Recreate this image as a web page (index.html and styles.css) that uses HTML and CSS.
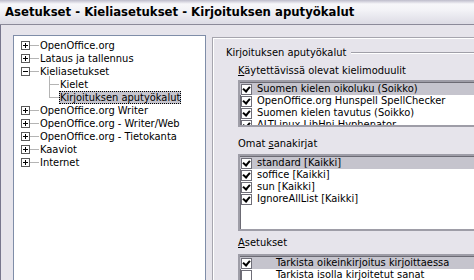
FILE: index.html
```html
<!DOCTYPE html>
<html lang="fi">
<head>
	<meta charset="UTF-8">
	<title>Asetukset - Kieliasetukset - Kirjoituksen aputyökalut</title>
	<link rel="stylesheet" href="styles.css">
</head>
<body>
	<div class="window">
		<div class="titlebar">Asetukset - Kieliasetukset - Kirjoituksen aputyökalut</div>
		<div class="body">
			<div class="tree">
				<ul class="root">
					<li class="node"><span class="exp plus"></span><span class="branch"></span><span class="label">OpenOffice.org</span></li>
					<li class="node"><span class="exp plus"></span><span class="branch"></span><span class="label">Lataus ja tallennus</span></li>
					<li class="node"><span class="exp minus"></span><span class="branch"></span><span class="label">Kieliasetukset</span></li>
					<li>
						<ul class="children">
							<li class="leaf"><span class="label">Kielet</span></li>
							<li class="leaf"><span class="label selected">Kirjoituksen aputyökalut</span></li>
						</ul>
					</li>
					<li class="node"><span class="exp plus"></span><span class="branch"></span><span class="label">OpenOffice.org Writer</span></li>
					<li class="node"><span class="exp plus"></span><span class="branch"></span><span class="label">OpenOffice.org - Writer/Web</span></li>
					<li class="node"><span class="exp plus"></span><span class="branch"></span><span class="label">OpenOffice.org - Tietokanta</span></li>
					<li class="node"><span class="exp plus"></span><span class="branch"></span><span class="label">Kaaviot</span></li>
					<li class="node"><span class="exp plus"></span><span class="branch"></span><span class="label">Internet</span></li>
				</ul>
			</div>

			<div class="page">
				<div class="group-title"><span>Kirjoituksen aputyökalut</span><i class="rule"></i></div>
				<div class="group">
					<div class="cap cap1"><u>K</u>äytettävissä olevat kielimoduulit</div>
					<div class="listbox lb1">
						<div class="row sel"><span class="check on"></span><span class="txt">Suomen kielen oikoluku (Soikko)</span></div>
						<div class="row"><span class="check on"></span><span class="txt">OpenOffice.org Hunspell SpellChecker</span></div>
						<div class="row"><span class="check on"></span><span class="txt">Suomen kielen tavutus (Soikko)</span></div>
						<div class="row"><span class="check on"></span><span class="txt">ALTLinux LibHnj Hyphenator</span></div>
					</div>

					<div class="cap cap2">Omat <u>s</u>anakirjat</div>
					<div class="listbox lb2">
						<div class="row sel"><span class="check on"></span><span class="txt">standard [Kaikki]</span></div>
						<div class="row"><span class="check on"></span><span class="txt">soffice [Kaikki]</span></div>
						<div class="row"><span class="check on"></span><span class="txt">sun [Kaikki]</span></div>
						<div class="row"><span class="check on"></span><span class="txt">IgnoreAllList [Kaikki]</span></div>
					</div>

					<div class="cap cap3"><u>A</u>setukset</div>
					<div class="listbox lb3">
						<div class="row sel"><span class="check on"></span><span class="txt">Tarkista oikeinkirjoitus kirjoittaessa</span></div>
						<div class="row"><span class="check"></span><span class="txt">Tarkista isolla kirjoitetut sanat</span></div>
					</div>
				</div>
			</div>
		</div>
	</div>
</body>
</html>
```

FILE: styles.css
```css
body {
	margin: 0;
	width: 474px;
	height: 280px;
	overflow: hidden;
	background: #e6e4eb;
	font-family: "DejaVu Sans Condensed", "Liberation Sans", sans-serif;
	font-size: 11px;
	color: #000;
}
ul {
	list-style: none;
	margin: 0;
	padding: 0;
}
.window {
	width: 640px;
	height: 280px;
	overflow: hidden;
}
.titlebar {
	height: 24px;
	line-height: 24px;
	padding-left: 5px;
	font-size: 13px;
	font-weight: bold;
	border-bottom: 1px solid #8b8a99;
	background: linear-gradient(#bdbccb 0, #f7f7fa 4px, #f3f3f7 10px, #dedde6 23px);
}
.body {
	display: flex;
	align-items: flex-start;
	height: 255px;
	padding: 10px 0 0 12px;
	border-left: 1px solid #77768d;
	box-sizing: border-box;
	overflow: hidden;
}

/* tree */
.tree {
	width: 191px;
	height: 260px;
	padding-top: 3px;
	background: #fff;
	border: 1px solid #7f8da8;
}
.node {
	display: flex;
	align-items: center;
	height: 13px;
	padding-left: 7px;
}
.exp {
	position: relative;
	width: 7px;
	height: 7px;
	border: 1px solid #5a5a5a;
	background: #fff;
}
.exp::before {
	content: "";
	position: absolute;
	left: 1px;
	top: 3px;
	width: 5px;
	height: 1px;
	background: #000;
}
.plus::after {
	content: "";
	position: absolute;
	left: 3px;
	top: 1px;
	width: 1px;
	height: 5px;
	background: #000;
}
.branch {
	width: 9px;
	height: 1px;
	background: #b4b4b4;
}
.label {
	padding: 0 1px;
	line-height: 13px;
	white-space: nowrap;
}
.label.selected {
	background: #c5c4cd;
	outline: 1px dotted #000;
	outline-offset: -1px;
}
.children {
	margin-left: 35px;
}
.leaf {
	position: relative;
	height: 13px;
	padding-left: 10px;
}
.leaf::before {
	content: "";
	position: absolute;
	left: 0;
	top: -2px;
	height: 15px;
	border-left: 1px solid #b4b4b4;
}
.leaf:last-child::before {
	height: 9px;
}
.leaf::after {
	content: "";
	position: absolute;
	left: 0;
	top: 6px;
	width: 10px;
	border-top: 1px solid #b4b4b4;
}

/* right page */
.page {
	flex: 1;
	height: 260px;
	margin: 2px 0 0 6px;
	padding: 8px 0 0 13px;
	border-top: 1px solid #a6a5ae;
	border-left: 1px solid #a6a5ae;
	box-shadow: inset 1px 1px 0 #fff;
}
.group-title {
	display: flex;
	align-items: center;
	height: 13px;
	line-height: 13px;
}
.rule {
	flex: 1;
	margin-left: 5px;
	border-top: 1px solid #a09fa8;
	border-bottom: 1px solid #fff;
}
.group {
	padding-left: 12px;
}
.cap {
	line-height: 13px;
	white-space: nowrap;
}
.cap1 { margin-top: 5px; }
.cap2 { margin-top: 10px; }
.cap3 { margin-top: 5px; }
.listbox {
	margin-top: 4px;
	padding: 1px 0 0;
	background: #fff;
	border: 2px solid #9e9da7;
	border-right: none;
	box-shadow: inset 1px 1px 0 #6c6b74;
	overflow: hidden;
	box-sizing: border-box;
}
.lb1 { height: 47px; margin-top: 3px; }
.lb2 { height: 77px; }
.lb3 { height: 40px; margin-top: 5px; }
.row {
	display: flex;
	align-items: center;
	height: 12px;
	padding-left: 1px;
	white-space: nowrap;
}
.row.sel {
	background: #c5c4cd;
}
.check {
	position: relative;
	flex: none;
	width: 9px;
	height: 9px;
	border: 1px solid #6f6e78;
	background: #fff;
}
.check.on::after {
	content: "";
	position: absolute;
	left: 2px;
	top: 0;
	width: 3px;
	height: 5px;
	border: solid #000;
	border-width: 0 2px 2px 0;
	transform: rotate(40deg);
}
.txt {
	margin-left: 5px;
	line-height: 12px;
}
.lb3 .txt {
	margin-left: 24px;
}
```
